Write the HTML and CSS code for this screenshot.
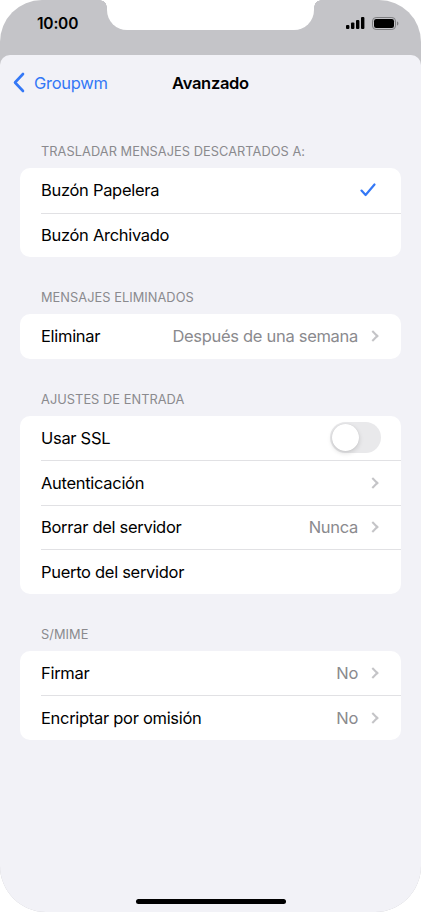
FILE: index.html
```html
<!DOCTYPE html>
<html lang="es">
<head>
<meta charset="utf-8">
<title>Avanzado</title>
<link rel="stylesheet" href="styles.css">
</head>
<body>
<div class="phone">
  <div class="notch"></div>
  <div class="status">
    <span class="time">10:00</span>
    <span class="status-icons">
      <svg width="20" height="12" viewBox="0 0 20 12">
        <rect x="0" y="8" width="3.4" height="4" rx="1" fill="#000"/>
        <rect x="5" y="5.5" width="3.4" height="6.5" rx="1" fill="#000"/>
        <rect x="10" y="3" width="3.4" height="9" rx="1" fill="#000"/>
        <rect x="15" y="0" width="3.4" height="12" rx="1" fill="#000"/>
      </svg>
      <svg width="27" height="13" viewBox="0 0 27 13">
        <rect x="0.5" y="0.5" width="23" height="12" rx="3.6" fill="none" stroke="#7d7d80" stroke-width="1"/>
        <rect x="2" y="2" width="20" height="9" rx="2.2" fill="#000"/>
        <path d="M25 4.5v4c0.9-0.3 1.4-1.1 1.4-2s-0.5-1.7-1.4-2z" fill="#7d7d80"/>
      </svg>
    </span>
  </div>
  <div class="sheet">
    <div class="nav">
      <span class="back">
        <svg width="12" height="21" viewBox="0 0 12 21"><path d="M10 2L2 10.5 10 19" fill="none" stroke="#3478f6" stroke-width="2.6" stroke-linecap="round" stroke-linejoin="round"/></svg>
        <span>Groupwm</span>
      </span>
      <span class="title">Avanzado</span>
    </div>

    <div class="section first">
      <div class="sec-head">TRASLADAR MENSAJES DESCARTADOS A:</div>
      <div class="card">
        <div class="row check-row"><span class="label">Buzón Papelera</span>
          <svg class="check" width="16" height="14" viewBox="0 0 16 14"><path d="M1.5 7.6L5.6 12 14.5 1.5" fill="none" stroke="#3478f6" stroke-width="2.2" stroke-linecap="round" stroke-linejoin="round"/></svg>
        </div>
        <div class="row"><span class="label">Buzón Archivado</span></div>
      </div>
    </div>

    <div class="section">
      <div class="sec-head">MENSAJES ELIMINADOS</div>
      <div class="card">
        <div class="row"><span class="label">Eliminar</span><span class="value">Después de una semana</span><span class="chev"></span></div>
      </div>
    </div>

    <div class="section">
      <div class="sec-head">AJUSTES DE ENTRADA</div>
      <div class="card">
        <div class="row toggle-row"><span class="label">Usar SSL</span><span class="toggle"><span class="knob"></span></span></div>
        <div class="row"><span class="label">Autenticación</span><span class="chev"></span></div>
        <div class="row"><span class="label">Borrar del servidor</span><span class="value">Nunca</span><span class="chev"></span></div>
        <div class="row"><span class="label">Puerto del servidor</span></div>
      </div>
    </div>

    <div class="section">
      <div class="sec-head">S/MIME</div>
      <div class="card">
        <div class="row"><span class="label">Firmar</span><span class="value">No</span><span class="chev"></span></div>
        <div class="row"><span class="label">Encriptar por omisión</span><span class="value">No</span><span class="chev"></span></div>
      </div>
    </div>

    <div class="home"></div>
  </div>
</div>
</body>
</html>
```
FILE: styles.css
```css
* { box-sizing: border-box; }
html, body { margin: 0; padding: 0; background: #fff; }
body { font-family: Inter, "Noto Sans", "Liberation Sans", sans-serif; }

.phone {
  position: relative;
  width: 421px;
  height: 912px;
  background: #c4c4c8;
  border-radius: 42px 42px 46px 46px;
  overflow: hidden;
  display: flex;
  flex-direction: column;
}

.notch {
  position: absolute;
  top: 0;
  left: 107px;
  width: 207px;
  height: 30px;
  background: #fff;
  border-radius: 0 0 20px 20px;
}
.notch::before, .notch::after {
  content: "";
  position: absolute;
  top: 0;
  width: 7px;
  height: 7px;
}
.notch::before {
  left: -7px;
  background: radial-gradient(circle at 0 7px, transparent 6.5px, #fff 7px);
}
.notch::after {
  right: -7px;
  background: radial-gradient(circle at 7px 7px, transparent 6.5px, #fff 7px);
}

.status {
  height: 55px;
  flex: none;
  display: flex;
  align-items: center;
  justify-content: space-between;
  padding: 0 22px 9px 37px;
}
.time {
  font-size: 15.5px;
  font-weight: 600;
  letter-spacing: -0.2px;
  color: #000;
}
.status-icons {
  display: flex;
  align-items: center;
  gap: 6px;
}

.sheet {
  flex: 1;
  background: #f2f2f7;
  border-radius: 10px 10px 0 0;
  display: flex;
  flex-direction: column;
}

.nav {
  position: relative;
  height: 55px;
  flex: none;
  display: flex;
  align-items: center;
  justify-content: center;
}
.back {
  position: absolute;
  left: 13px;
  top: 17px;
  display: flex;
  align-items: center;
  gap: 9px;
  color: #3478f6;
  font-size: 16.5px;
  letter-spacing: -0.3px;
}
.title {
  font-size: 16.5px;
  font-weight: 600;
  letter-spacing: -0.3px;
  color: #000;
}

.section { margin-top: 33px; }
.section.first { margin-top: 34px; }
.sec-head {
  padding-left: 41px;
  font-size: 12.8px;
  line-height: 16px;
  color: #8a8a8e;
  letter-spacing: 0.05px;
  margin-bottom: 8px;
}
.card {
  margin: 0 20px;
  background: #fff;
  border-radius: 10px;
  overflow: hidden;
}
.row {
  height: 44.5px;
  margin-left: 21px;
  padding-right: 21px;
  display: flex;
  align-items: center;
  font-size: 16.5px;
  letter-spacing: -0.3px;
  color: #000;
}
.row + .row {
  border-top: 1px solid #e1e1e4;
}
.label { flex: 1; }
.value { color: #8a8a8e; margin-right: 11px; }
.chev {
  width: 8px;
  height: 8px;
  border-top: 2px solid #c4c4c7;
  border-right: 2px solid #c4c4c7;
  transform: rotate(45deg);
  margin-right: 3px;
}
.check-row { padding-right: 25px; }
.toggle-row { padding-right: 20px; }
.toggle {
  width: 51px;
  height: 31px;
  border-radius: 16px;
  background: #e9e9eb;
  padding: 2px;
  display: flex;
}
.knob {
  width: 27px;
  height: 27px;
  border-radius: 50%;
  background: #fff;
  box-shadow: 0 2px 5px rgba(0,0,0,0.15), 0 0 1px rgba(0,0,0,0.12);
}

.home {
  margin-top: auto;
  margin-bottom: 8px;
  align-self: center;
  width: 150px;
  height: 5px;
  border-radius: 3px;
  background: #000;
}
```
